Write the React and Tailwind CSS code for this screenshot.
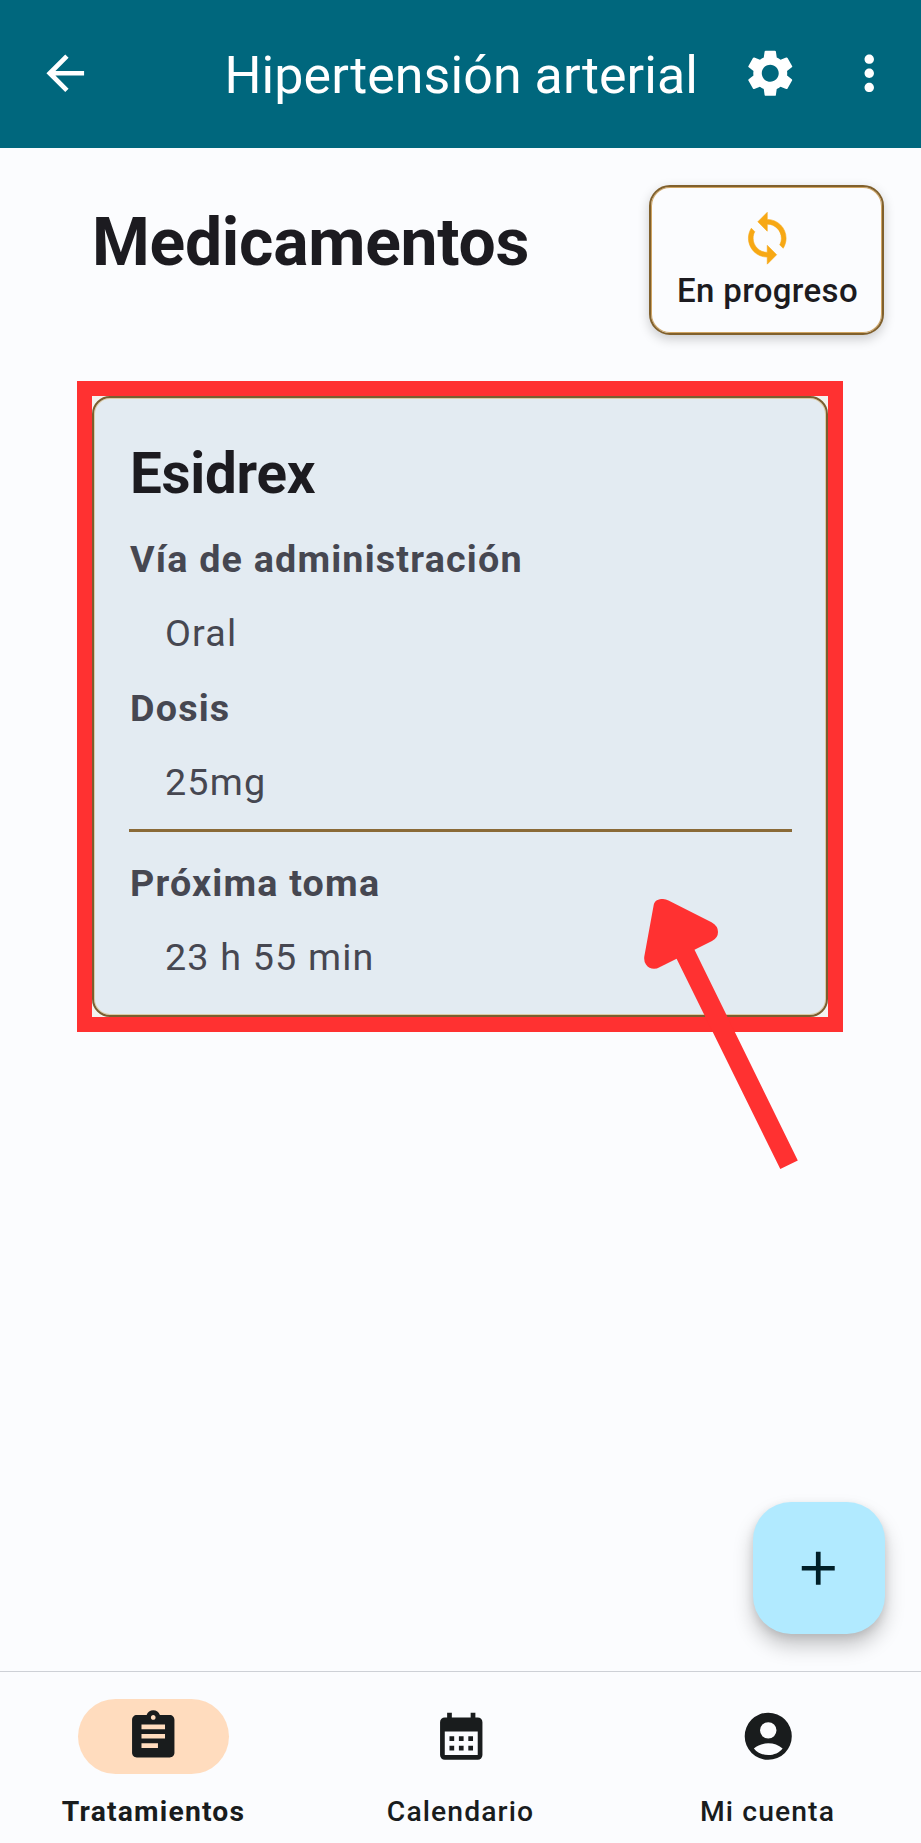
import React from "react";
import { MdArrowBack, MdSettings, MdMoreVert, MdAdd } from "react-icons/md";

function SyncIcon() {
  return (
    <svg
      viewBox="0 0 24 24"
      className="size-[56.5px] text-[#f7a814]"
      fill="currentColor"
      stroke="currentColor"
      strokeWidth="0.25"
    >
      <path d="M12 4V1L8 5l4 4V6c3.310 0 6 2.690 6 6 0 1.010-.250 1.970-.700 2.800l1.460 1.460C19.540 15.030 20 13.570 20 12c0-4.420-3.580-8-8-8zm0 14c-3.310 0-6-2.690-6-6 0-1.010.250-1.970.700-2.800L5.240 7.740C4.460 8.970 4 10.430 4 12c0 4.420 3.580 8 8 8v3l4-4-4-4v3z" />
    </svg>
  );
}

function ClipboardIcon() {
  return (
    <svg viewBox="0 0 24 24" className="size-[56.5px]" fill="currentColor">
      <path d="M19 3h-4.180C14.400 1.840 13.300 1 12 1c-1.300 0-2.400.840-2.820 2H5c-1.100 0-2 .900-2 2v14c0 1.100.900 2 2 2h14c1.100 0 2-.900 2-2V5c0-1.100-.900-2-2-2zm-7 0c.550 0 1 .450 1 1s-.450 1-1 1-1-.450-1-1 .450-1 1-1zm2 14H7v-2h7v2zm3-4H7v-2h10v2zm0-4H7V7h10v2z" />
    </svg>
  );
}

function CalendarIcon() {
  return (
    <svg viewBox="0 0 24 24" className="size-[56.5px]" fill="currentColor">
      <path
        fillRule="evenodd"
        d="M6 2h2v2h8V2h2v2h1a2 2 0 0 1 2 2v14a2 2 0 0 1-2 2H5a2 2 0 0 1-2-2V6a2 2 0 0 1 2-2h1zM5 10v10h14V10z"
      />
      <path d="M7 12h2v2H7zM11 12h2v2h-2zM15 12h2v2h-2zM7 16h2v2H7zM11 16h2v2h-2zM15 16h2v2h-2z" />
    </svg>
  );
}

function AccountIcon() {
  return (
    <svg viewBox="0 0 24 24" className="size-[56.5px]" fill="currentColor">
      <path
        fillRule="evenodd"
        d="M12 2a10 10 0 1 0 0 20a10 10 0 0 0 0-20zM12 6a3.5 3.5 0 1 1 0 7a3.5 3.5 0 0 1 0-7zM12 20c-2.5 0-4.7-1-6.1-2.8C7.6 15.8 9.7 15 12 15s4.4.8 6.1 2.2C16.7 19 14.5 20 12 20z"
      />
    </svg>
  );
}

function Label({ children }) {
  return (
    <p className="h-[75px] text-[37.7px] leading-[75px] font-bold tracking-[1.18px] text-[#464751]">
      {children}
    </p>
  );
}

function Value({ children }) {
  return (
    <p className="h-[74px] pl-[35px] text-[37.7px] leading-[73px] tracking-[1.18px] text-[#464751]">
      {children}
    </p>
  );
}

function NavItem({ icon, label, active }) {
  return (
    <button className="flex flex-1 flex-col items-center pt-[27px]">
      <span
        className={
          active
            ? "flex h-[75px] w-[151px] items-center justify-center rounded-full bg-[#ffdcbe]"
            : "flex h-[75px] w-[151px] items-center justify-center rounded-full pl-px"
        }
      >
        {icon}
      </span>
      <span
        className={
          active
            ? "mt-[18px] text-[28.3px] leading-[40px] font-bold tracking-[1.18px]"
            : "mt-[18px] text-[28.3px] leading-[40px] font-medium tracking-[1.1px]"
        }
      >
        {label}
      </span>
    </button>
  );
}

export default function App() {
  return (
    <div className="relative flex h-[1843px] w-[921px] flex-col overflow-hidden bg-[#fbfcfe] font-[Roboto,sans-serif] text-[#1c1b20]">
      <header className="flex h-[148px] items-center bg-[#00677d] pb-[2px] pl-[37px] text-white">
        <MdArrowBack className="size-[56.5px]" />
        <h1 className="mt-[6px] ml-[131px] w-[517.500px] text-[51.9px] leading-[64px] tracking-[0.1px] whitespace-nowrap">
          Hipertensión arterial
        </h1>
        <MdSettings className="size-[56.5px]" />
        <MdMoreVert className="ml-[42.500px] size-[56.5px]" />
      </header>

      <section className="flex items-start justify-between pt-[37px] pr-[37px] pl-[92px]">
        <h2 className="mt-[20px] text-[66px] leading-[76px] font-bold tracking-[-0.25px]">
          Medicamentos
        </h2>
        <div className="flex h-[150px] w-[235px] flex-col items-center rounded-[21px] border-2 border-[#80602c] bg-[#fbfcfe] pt-[23px] pl-[2px] shadow-[inset_0_0_0_1px_#cfa462,0_4px_12px_rgba(0,0,0,0.2)]">
          <SyncIcon />
          <p className="text-[33px] leading-[47px] font-medium tracking-[0.34px] whitespace-nowrap">
            En progreso
          </p>
        </div>
      </section>

      <section className="mt-[46px] ml-[77px] h-[651px] w-[766px] border-[15px] border-[#ff3131] bg-[#f4f3f0]">
        <article className="h-full rounded-[18px] border-2 border-[#7a5e30] bg-[#e3ebf2] pt-[28px] pr-[34px] pl-[36px] shadow-[inset_0_0_0_1px_#dccba6]">
          <h3 className="h-[96px] text-[56.5px] leading-[96px] font-bold tracking-[-0.25px]">
            Esidrex
          </h3>
          <Label>Vía de administración</Label>
          <Value>Oral</Value>
          <Label>Dosis</Label>
          <Value>25mg</Value>
          <hr className="mt-[9px] mb-[14px] -ml-px h-[3px] border-0 bg-[#8a6a38]" />
          <Label>Próxima toma</Label>
          <Value>23 h 55 min</Value>
        </article>
      </section>

      <div className="flex flex-1 items-end justify-end pr-[36px] pb-[37px]">
        <button className="flex size-[132px] items-center justify-center rounded-[38px] bg-[#b1eaff] pr-[2px] text-[#001f28] shadow-[0_12px_20px_rgba(0,0,0,0.22),0_3px_8px_rgba(0,0,0,0.1)]">
          <MdAdd className="size-[56.5px]" />
        </button>
      </div>

      <nav className="flex h-[172px] border-t border-[#cdd0d6] text-[#191c1d]">
        <NavItem active icon={<ClipboardIcon />} label="Tratamientos" />
        <NavItem icon={<CalendarIcon />} label="Calendario" />
        <NavItem icon={<AccountIcon />} label="Mi cuenta" />
      </nav>

      <svg
        viewBox="640 890 170 285"
        className="absolute top-[890px] left-[640px] h-[285px] w-[170px]"
        fill="#ff3131"
      >
        <path d="M653.7 905C654.5 900.500 658.500 899 663 899Q666 899 668.500 900.500L711.500 922.300Q718 926 718 932Q718 938 712 941L694.500 949.700L797.800 1160.500L780.300 1169L676.600 958.700L659.500 967.300Q657 968.800 654 968.800Q649 968.800 646 964.500Q643.700 961.500 644.300 956.500Z" />
      </svg>
    </div>
  );
}
